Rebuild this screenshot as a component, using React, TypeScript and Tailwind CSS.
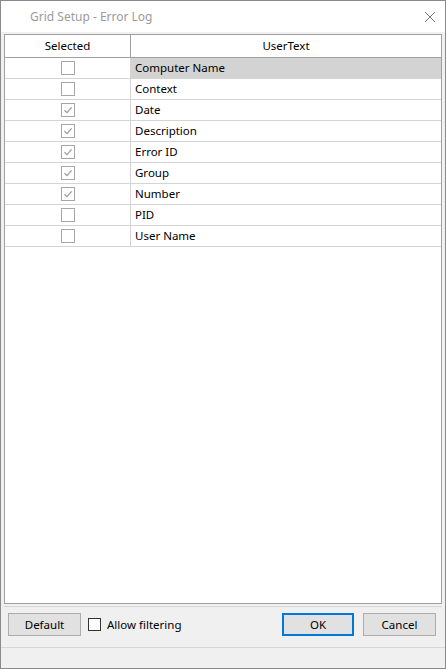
const rows = [
  { name: 'Computer Name', checked: false },
  { name: 'Context', checked: false },
  { name: 'Date', checked: true },
  { name: 'Description', checked: true },
  { name: 'Error ID', checked: true },
  { name: 'Group', checked: true },
  { name: 'Number', checked: true },
  { name: 'PID', checked: false },
  { name: 'User Name', checked: false },
]

function Check({ checked }: { checked: boolean }) {
  return (
    <div className="w-[14px] h-[14px] border border-[#a6a6a6] bg-white flex items-center justify-center">
      {checked && (
        <svg width="10" height="10" viewBox="0 0 10 10">
          <path d="M1.5 5.2 L4 7.6 L8.6 2.4" fill="none" stroke="#9a9a9a" strokeWidth="1.2" />
        </svg>
      )}
    </div>
  )
}

export default function App() {
  return (
    <div
      className="w-[446px] h-[669px] bg-[#f0f0f0] border border-[#8a8a8a] flex flex-col text-[11.5px] text-black"
      style={{ fontFamily: '"Noto Sans", "Liberation Sans", sans-serif' }}
    >
      {/* title bar */}
      <div className="h-[31px] bg-white flex items-center justify-between pl-[29px] pr-[9px] shrink-0">
        <span className="text-[#9b9b9b] text-[12px]">Grid Setup - Error Log</span>
        <svg width="12" height="12" viewBox="0 0 12 12">
          <path d="M1 1 L11 11 M11 1 L1 11" stroke="#7a7a7a" strokeWidth="1" />
        </svg>
      </div>

      {/* grid */}
      <div className="mx-[3px] mt-[2px] h-[570px] border border-[#a0a0a0] bg-white shrink-0">
        <div className="grid grid-cols-[126px_1fr] h-[23px] border-b border-[#a0a0a0]">
          <div className="border-r border-[#a0a0a0] flex items-center justify-center">Selected</div>
          <div className="flex items-center justify-center">UserText</div>
        </div>
        {rows.map((r, i) => (
          <div key={r.name} className="grid grid-cols-[126px_1fr] h-[21px] border-b border-[#d4d4d4]">
            <div className="border-r border-[#d4d4d4] flex items-center justify-center">
              <Check checked={r.checked} />
            </div>
            <div className={`flex items-center pl-[4px] ${i === 0 ? 'bg-[#d3d3d3]' : ''}`}>{r.name}</div>
          </div>
        ))}
      </div>

      <div className="mt-[2px] mx-[3px] border-t border-[#d4d4d4]" />

      {/* buttons */}
      <div className="flex items-start pl-[7px] pr-[9px] pt-[6px] h-[40px] shrink-0">
        <button className="w-[73px] h-[23px] bg-[#e1e1e1] border border-[#adadad]">Default</button>
        <label className="flex items-center ml-[7px] gap-[6px] h-[23px]">
          <span className="w-[13px] h-[13px] border border-[#333333] bg-white" />
          <span>Allow filtering</span>
        </label>
        <button className="ml-auto w-[72px] h-[23px] bg-[#e1e1e1] border-2 border-[#0078d7]">OK</button>
        <button className="ml-[9px] w-[73px] h-[23px] bg-[#e1e1e1] border border-[#adadad]">Cancel</button>
      </div>

      <div className="border-t border-[#d7d7d7]" />
    </div>
  )
}
